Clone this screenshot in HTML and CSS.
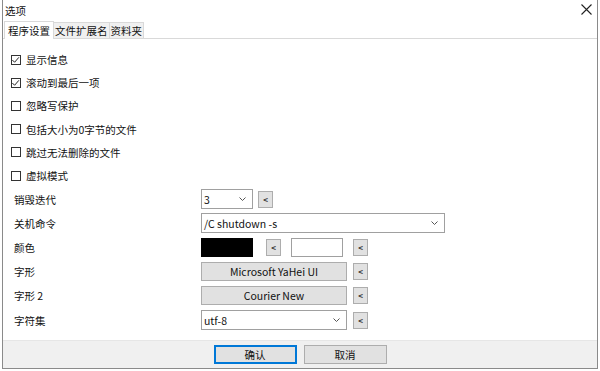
FILE: index.html
```html
<!DOCTYPE html>
<html lang="zh-CN">
<head>
    <meta charset="UTF-8">
    <title>选项</title>
    <link rel="stylesheet" href="styles.css">
</head>
<body>
<div class="window">
    <div class="titlebar">
        <span class="title">选项</span>
        <span class="close"><svg width="11" height="11" viewBox="0 0 11 11"><path d="M0.5 0.5 L10.5 10.5 M10.5 0.5 L0.5 10.5" stroke="#222" stroke-width="1.1" fill="none"/></svg></span>
    </div>
    <div class="tabs">
        <div class="tab active">程序设置</div>
        <div class="tab">文件扩展名</div>
        <div class="tab">资料夹</div>
    </div>
    <div class="panel">
        <ul class="checks">
            <li><span class="box"><svg width="10" height="10" viewBox="0 0 10 10"><path d="M1.5 5 L4 7.5 L8.8 2" stroke="#222" stroke-width="1.1" fill="none"/></svg></span>显示信息</li>
            <li><span class="box"><svg width="10" height="10" viewBox="0 0 10 10"><path d="M1.5 5 L4 7.5 L8.8 2" stroke="#222" stroke-width="1.1" fill="none"/></svg></span>滚动到最后一项</li>
            <li><span class="box"></span>忽略写保护</li>
            <li><span class="box"></span>包括大小为0字节的文件</li>
            <li><span class="box"></span>跳过无法删除的文件</li>
            <li><span class="box"></span>虚拟模式</li>
        </ul>
        <div class="form">
            <div class="label">销毁迭代</div>
            <div class="field">
                <div class="combo w-small"><span>3</span><svg class="chev" width="7" height="4" viewBox="0 0 7 4"><path d="M0.5 0.5 L3.5 3.5 L6.5 0.5" stroke="#555" fill="none"/></svg></div>
                <button class="mini gap5">&lt;</button>
            </div>
            <div class="label">关机命令</div>
            <div class="field">
                <div class="combo w-wide"><span>/C shutdown -s</span><svg class="chev" width="7" height="4" viewBox="0 0 7 4"><path d="M0.5 0.5 L3.5 3.5 L6.5 0.5" stroke="#555" fill="none"/></svg></div>
            </div>
            <div class="label">颜色</div>
            <div class="field">
                <div class="swatch black"></div>
                <button class="mini gap13">&lt;</button>
                <div class="swatch white gap10"></div>
                <button class="mini gap10">&lt;</button>
            </div>
            <div class="label">字形</div>
            <div class="field">
                <button class="pick">Microsoft YaHei UI</button>
                <button class="mini gap6">&lt;</button>
            </div>
            <div class="label">字形 2</div>
            <div class="field">
                <button class="pick">Courier New</button>
                <button class="mini gap6">&lt;</button>
            </div>
            <div class="label">字符集</div>
            <div class="field">
                <div class="combo w-mid"><span>utf-8</span><svg class="chev" width="7" height="4" viewBox="0 0 7 4"><path d="M0.5 0.5 L3.5 3.5 L6.5 0.5" stroke="#555" fill="none"/></svg></div>
                <button class="mini gap6">&lt;</button>
            </div>
        </div>
    </div>
    <div class="footer">
        <button class="btn primary">确认</button>
        <button class="btn">取消</button>
    </div>
</div>
</body>
</html>
```

FILE: styles.css
```css
body { margin: 0; background: #fff; font-family: "Noto Sans CJK SC", "Noto Sans", sans-serif; font-size: 10.5px; color: #111; }
.window { margin-left: 2px; width: 594px; height: 368px; border: 1px solid #8a8a8a; border-top: none; display: flex; flex-direction: column; background: #fff; }
.titlebar { height: 20px; display: flex; align-items: center; justify-content: space-between; padding: 0 5px 0 2px; }
.title { font-size: 10.5px; }
.close { display: flex; margin-top: -2px; }
.tabs { height: 18px; display: flex; align-items: flex-end; padding-left: 1px; border-bottom: 1px solid #d9d9d9; }
.tab { height: 15px; line-height: 15px; padding: 0 1px; border: 1px solid #d9d9d9; border-bottom: none; background: #f0f0f0; margin-left: -1px; }
.tab.active { height: 17px; line-height: 17px; padding: 0 3px; background: #fff; position: relative; top: 1px; margin-left: 0; z-index: 1; }
.panel { flex: 1; padding: 15px 0 0 8px; }
.checks { list-style: none; margin: 0; padding: 0; }
.checks li { height: 23.2px; display: flex; align-items: center; margin-top: -6px; margin-bottom: 6px; }
.box { width: 10px; height: 10px; border: 1px solid #333; margin-right: 5px; display: flex; box-sizing: border-box; }
.box svg { margin: -1px 0 0 -1px; }
.form { display: grid; grid-template-columns: 190px 1fr; grid-auto-rows: 24.2px; align-items: center; margin-top: -6px; }
.label { padding-left: 3px; }
.field { display: flex; align-items: center; }
.combo { height: 20px; box-sizing: border-box; border: 1px solid #a0a0a0; background: #fff; display: flex; align-items: center; justify-content: space-between; padding: 0 6px 0 2px; }
.w-small { width: 52px; }
.w-wide { width: 244px; }
.w-mid { width: 146px; }
.chev { display: block; }
button { font-family: inherit; font-size: 10.5px; color: #111; background: #e1e1e1; border: 1px solid #adadad; padding: 0; margin: 0; }
.mini { width: 15px; height: 17px; font-size: 8px; font-weight: bold; color: #333; }
.gap5 { margin-left: 5px; }
.gap6 { margin-left: 6px; }
.gap10 { margin-left: 10px; }
.gap13 { margin-left: 13px; }
.swatch { width: 52px; height: 19px; box-sizing: border-box; border: 1px solid #a0a0a0; }
.swatch.black { background: #000; border-color: #000; }
.swatch.white { background: #fff; }
.pick { width: 146px; height: 19px; }
.footer { height: 27px; background: #f0f0f0; display: flex; justify-content: center; align-items: center; gap: 7px; border-top: 1px solid #e6e6e6; }
.btn { width: 83px; height: 19px; }
.btn.primary { border: 2px solid #0078d7; }
```
